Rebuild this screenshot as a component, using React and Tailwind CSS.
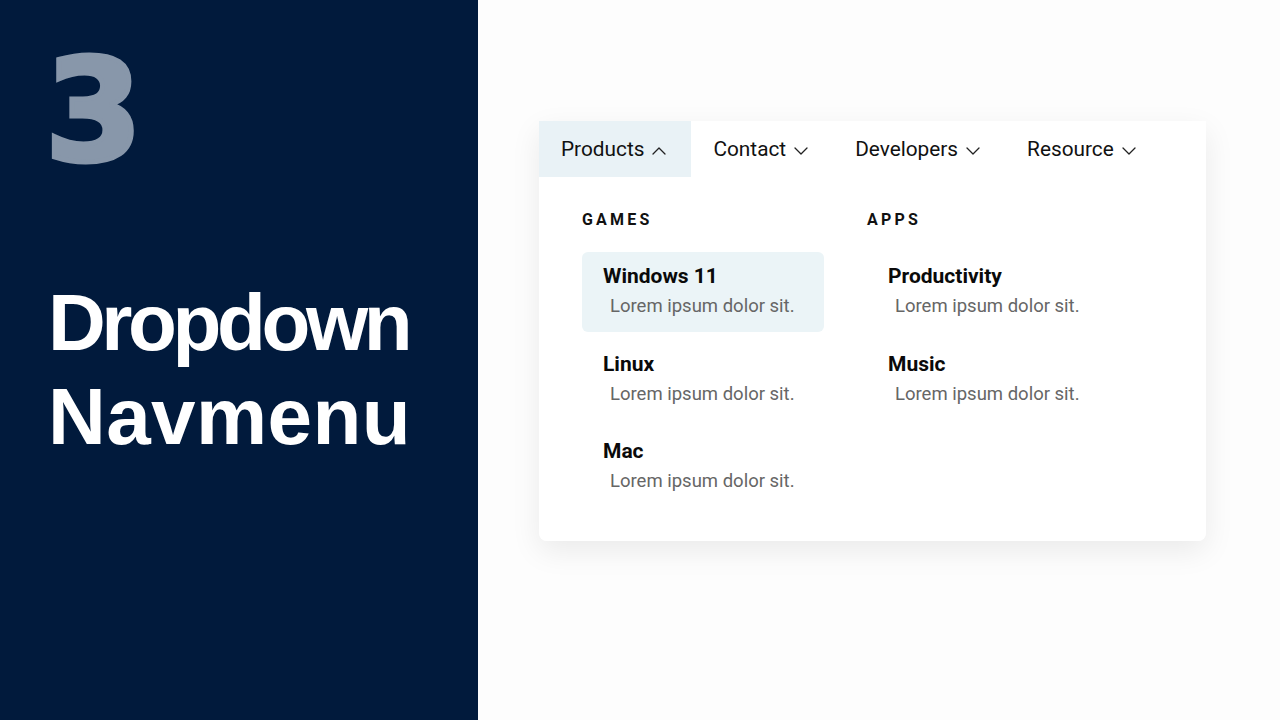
import { useState } from "react";

const MENU = {
  Games: [
    { title: "Windows 11", text: "Lorem ipsum dolor sit." },
    { title: "Linux", text: "Lorem ipsum dolor sit." },
    { title: "Mac", text: "Lorem ipsum dolor sit." },
  ],
  Apps: [
    { title: "Productivity", text: "Lorem ipsum dolor sit." },
    { title: "Music", text: "Lorem ipsum dolor sit." },
  ],
};

const NAV = ["Products", "Contact", "Developers", "Resource"];

function Chevron({ up }) {
  return (
    <svg width="14" height="8" viewBox="0 0 14 8" fill="none" className="mt-[2px]">
      <polyline
        points={up ? "1,7 7,1 13,7" : "1,1 7,7 13,1"}
        stroke="#222"
        strokeWidth="1.3"
        strokeLinecap="round"
        strokeLinejoin="round"
      />
    </svg>
  );
}

function App() {
  const [active, setActive] = useState("Products");
  const [hovered, setHovered] = useState("Windows 11");

  return (
    <div className="flex w-[1280px] h-[720px] overflow-hidden">
      <div className="w-[478px] shrink-0 bg-[#011a3c] pl-[48px] pt-[42px]">
        <div
          className="-ml-[3px] text-[140px] leading-[140px] font-bold text-[#8897aa] [-webkit-text-stroke:5px_#8897aa]"
          style={{ fontFamily: "'DejaVu Sans', sans-serif" }}
        >
          3
        </div>
        <h1
          className="mt-[94px] text-[80px] leading-[94px] font-bold text-white"
          style={{ fontFamily: "'Liberation Sans', Arial, sans-serif" }}
        >
          <span className="tracking-[-0.055em]">Dropdown</span>
          <br />
          <span className="tracking-[0.005em]">Navmenu</span>
        </h1>
      </div>

      <div className="flex-1 bg-[#fdfdfd] pt-[121px] pl-[61px]" style={{ fontFamily: "Roboto, 'Noto Sans', sans-serif" }}>
        <div className="w-[667px] shadow-[0_10px_30px_rgba(0,0,0,0.08)] rounded-b-lg">
          <nav className="flex h-[56px] bg-white">
            {NAV.map((name) => (
              <button
                key={name}
                onClick={() => setActive(name)}
                className={`flex items-center gap-2 pt-[2px] pl-[22px] pr-[25px] text-[20.8px] text-[#111] ${active === name ? "bg-[#e9f2f6]" : "bg-transparent"}`}
              >
                {name}
                <Chevron up={active === name} />
              </button>
            ))}
          </nav>

          <div className="h-[364px] bg-white rounded-b-lg pt-[33px] pl-[43px] flex">
            {Object.keys(MENU).map((group) => (
              <div key={group} className="w-[285px]">
                <h3 className="text-[16px] leading-5 font-bold tracking-[0.2em] uppercase text-[#111]">{group}</h3>
                <ul className="mt-[22px] w-[242px] flex flex-col gap-[7.5px]">
                  {MENU[group].map((item) => (
                    <li
                      key={item.title}
                      onMouseEnter={() => setHovered(item.title)}
                      className={`rounded-md pl-[21px] pt-[11px] pb-[13px] ${hovered === item.title ? "bg-[#ebf4f7]" : ""}`}
                    >
                      <div className="text-[21px] leading-[26px] font-bold text-[#0a0a0a]">{item.title}</div>
                      <div className="mt-[4px] ml-[7px] text-[18.5px] leading-[26px] text-[#666]">{item.text}</div>
                    </li>
                  ))}
                </ul>
              </div>
            ))}
          </div>
        </div>
      </div>
    </div>
  );
}

export default App;
